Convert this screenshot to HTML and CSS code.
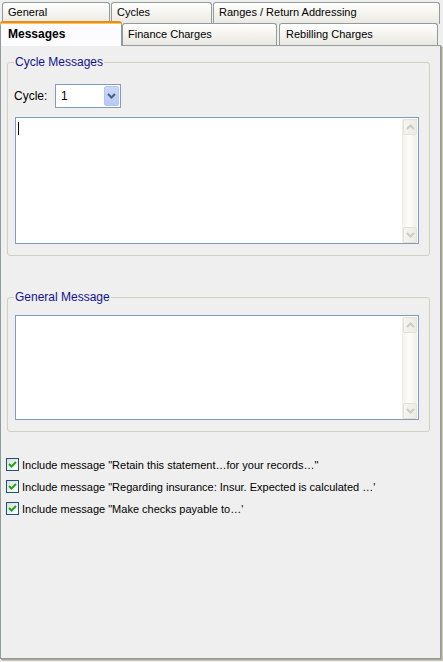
FILE: index.html
```html
<!DOCTYPE html>
<html lang="en">
<head>
    <meta charset="UTF-8">
    <title>Statement Options</title>
    <link rel="stylesheet" href="styles.css">
</head>
<body>
    <div class="window">
        <!-- tab strip, two rows -->
        <div class="tabstrip">
            <div class="tab-row row-back">
                <div class="tab w-general">General</div>
                <div class="tab w-cycles">Cycles</div>
                <div class="tab w-ranges">Ranges / Return Addressing</div>
            </div>
            <div class="tab-row row-front">
                <div class="tab selected w-messages">Messages</div>
                <div class="tab w-finance">Finance Charges</div>
                <div class="tab w-rebilling">Rebilling Charges</div>
            </div>
        </div>

        <div class="panel">
            <fieldset class="group first">
                <legend>Cycle Messages</legend>
                <div class="cycle-row">
                    <label class="cycle-label">Cycle:</label>
                    <div class="combo">
                        <span class="combo-value">1</span>
                        <span class="combo-btn">
                            <svg width="9" height="6" viewBox="0 0 9 6"><polyline points="1,1 4.5,4.5 8,1" fill="none" stroke="#4d6185" stroke-width="2"/></svg>
                        </span>
                    </div>
                </div>
                <div class="memo memo-cycle">
                    <div class="memo-text"><span class="caret"></span></div>
                    <div class="vscroll">
                        <span class="sbtn"><svg width="9" height="6" viewBox="0 0 9 6"><polyline points="1,5 4.5,1.5 8,5" fill="none" stroke="#cfcdc2" stroke-width="2"/></svg></span>
                        <span class="sbtn"><svg width="9" height="6" viewBox="0 0 9 6"><polyline points="1,1 4.5,4.5 8,1" fill="none" stroke="#cfcdc2" stroke-width="2"/></svg></span>
                    </div>
                </div>
            </fieldset>

            <fieldset class="group second">
                <legend>General Message</legend>
                <div class="memo memo-general">
                    <div class="memo-text"></div>
                    <div class="vscroll">
                        <span class="sbtn"><svg width="9" height="6" viewBox="0 0 9 6"><polyline points="1,5 4.5,1.5 8,5" fill="none" stroke="#cfcdc2" stroke-width="2"/></svg></span>
                        <span class="sbtn"><svg width="9" height="6" viewBox="0 0 9 6"><polyline points="1,1 4.5,4.5 8,1" fill="none" stroke="#cfcdc2" stroke-width="2"/></svg></span>
                    </div>
                </div>
            </fieldset>

            <div class="checks">
                <div class="check-row">
                    <span class="checkbox"><svg width="11" height="11" viewBox="0 0 11 11"><polyline points="2,5 4.5,7.5 9,3" fill="none" stroke="#21a121" stroke-width="2"/></svg></span>
                    <span>Include message "Retain this statement…for your records…"</span>
                </div>
                <div class="check-row">
                    <span class="checkbox"><svg width="11" height="11" viewBox="0 0 11 11"><polyline points="2,5 4.5,7.5 9,3" fill="none" stroke="#21a121" stroke-width="2"/></svg></span>
                    <span>Include message "Regarding insurance: Insur. Expected is calculated …'</span>
                </div>
                <div class="check-row">
                    <span class="checkbox"><svg width="11" height="11" viewBox="0 0 11 11"><polyline points="2,5 4.5,7.5 9,3" fill="none" stroke="#21a121" stroke-width="2"/></svg></span>
                    <span>Include message "Make checks payable to…'</span>
                </div>
            </div>
        </div>
    </div>
</body>
</html>
```

FILE: styles.css
```css
body {
    margin: 0;
    background-color: #ece9d8;
    font-family: "Liberation Sans", Arial, sans-serif;
    font-size: 11px;
    color: #000;
}
.window {
    width: 443px;
    height: 662px;
    background-color: #efefef;
}
.tabstrip {
    height: 45px;
}
.tab-row {
    display: flex;
}
.row-back {
    padding: 2px 0 0 2px;
    height: 21px;
    gap: 1px;
}
.row-front {
    height: 22px;
}
.tab {
    box-sizing: border-box;
    border: 1px solid #919b9c;
    border-bottom: none;
    border-radius: 3px 3px 0 0;
    background: linear-gradient(#ffffff, #f2f1ec 60%, #e9e8e2);
    padding: 3px 0 0 5px;
    white-space: nowrap;
}
.row-back .tab {
    height: 22px;
}
.row-front .tab {
    height: 22px;
    padding-top: 4px;
}
.w-general { width: 108px; }
.w-cycles { width: 101px; }
.w-ranges { width: 227px; }
.w-messages { width: 122px; }
.w-finance { width: 155px; margin-right: 2px; }
.w-rebilling { width: 159px; padding-left: 6px; }
.tab.selected {
    position: relative;
    z-index: 2;
    height: 25px;
    margin-top: -2px;
    border: none;
    border-top: 2px solid #e68b2c;
    border-radius: 3px 3px 0 0;
    box-shadow: inset 0 1px 0 #ffc73c, inset 1px 0 0 #919b9c, inset -1px 0 0 #919b9c;
    background: #fcfcfe;
    padding: 4px 0 0 8px;
    font-weight: bold;
    font-size: 12px;
}
.panel {
    position: relative;
    z-index: 1;
    box-sizing: border-box;
    width: 441px;
    height: 614px;
    border: 1px solid #919b9c;
    background-color: #efefef;
    box-shadow: 1px 1px 0 #aca899, 2px 2px 0 #cbc7b8;
    padding-top: 9px;
}
.group {
    box-sizing: border-box;
    width: 423px;
    margin: 0 0 0 6px;
    padding: 0 10px 11px 7px;
    border: 1px solid #d0d0bf;
    border-radius: 3px;
}
.group legend {
    margin-left: -1px;
    padding: 0 1px;
    color: #12128e;
    font-size: 12px;
    line-height: 14px;
}
.group.second {
    margin-top: 34px;
}
.cycle-row {
    display: flex;
    align-items: center;
    margin: 15px 0 0 -1px;
}
.cycle-label {
    width: 41px;
    font-size: 12px;
}
.combo {
    box-sizing: border-box;
    width: 66px;
    height: 24px;
    border: 1px solid #7f9db9;
    background: #fff;
    display: flex;
    align-items: center;
    justify-content: space-between;
    padding: 1px;
}
.combo-value {
    padding-left: 4px;
    font-size: 12px;
}
.combo-btn {
    width: 15px;
    height: 20px;
    border-radius: 2px;
    background: linear-gradient(#cbd8fb, #b7c9f6);
    border: 1px solid #b4c6f2;
    box-sizing: border-box;
    display: flex;
    align-items: center;
    justify-content: center;
}
.memo {
    box-sizing: border-box;
    display: flex;
    width: 404px;
    border: 1px solid #7f9db9;
    background: #fff;
}
.memo-cycle {
    margin-top: 9px;
    height: 127px;
}
.memo-general {
    margin-top: 11px;
    height: 105px;
}
.memo-text {
    flex: 1;
    padding: 4px 2px;
}
.caret {
    display: block;
    width: 1px;
    height: 13px;
    background: #000;
}
.vscroll {
    box-sizing: border-box;
    width: 15px;
    margin: 1px 1px 0 0;
    display: flex;
    flex-direction: column;
    justify-content: space-between;
    background: linear-gradient(to right, #f3f2ec, #fdfdfa 45%, #f0efe8);
    border-left: 1px solid #eeede6;
}
.sbtn {
    box-sizing: border-box;
    height: 16px;
    border: 1px solid #e4e2d8;
    border-radius: 2px;
    background: linear-gradient(to right, #f5f4ef, #ecebe4);
    display: flex;
    align-items: center;
    justify-content: center;
}
.checks {
    margin: 26px 0 0 5px;
    display: flex;
    flex-direction: column;
    gap: 9px;
}
.check-row {
    display: flex;
    align-items: center;
    height: 13px;
    gap: 3px;
    font-size: 11px;
    white-space: nowrap;
}
.checkbox {
    box-sizing: border-box;
    width: 13px;
    height: 13px;
    border: 1px solid #1c5180;
    background: linear-gradient(135deg, #dcdcd7, #ffffff);
    display: flex;
    align-items: center;
    justify-content: center;
}
```
